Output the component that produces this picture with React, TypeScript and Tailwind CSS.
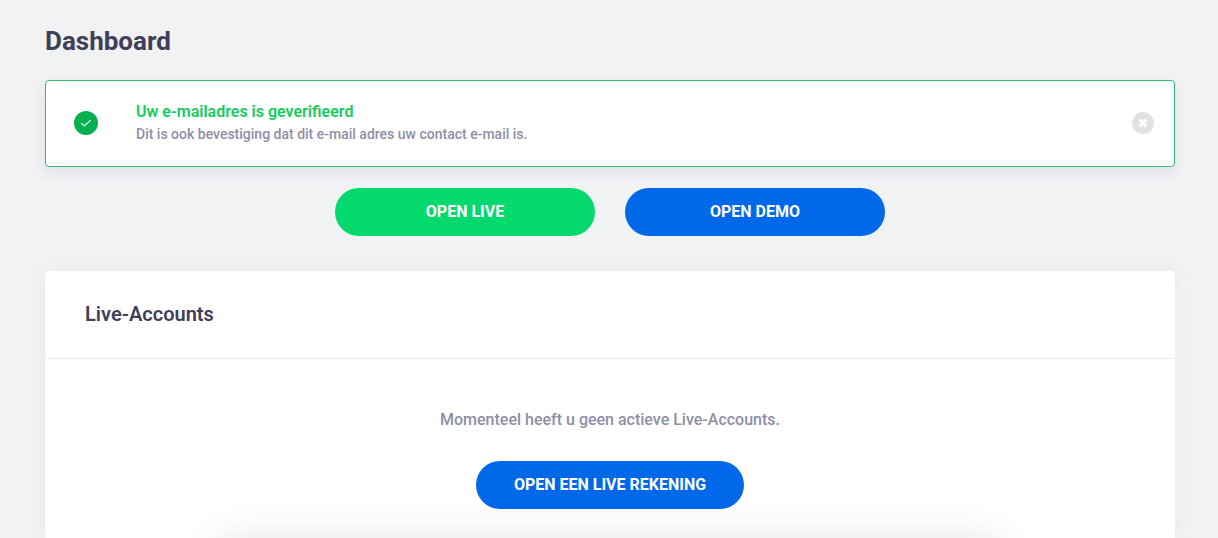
import React, { useState } from 'react'
import clsx from 'clsx'

interface PillButtonProps {
  children: React.ReactNode
  className?: string
}

const PillButton: React.FC<PillButtonProps> = ({ children, className }) => (
  <button
    type="button"
    className={clsx('h-12 cursor-pointer rounded-full text-base font-bold text-white uppercase', className)}
  >
    {children}
  </button>
)

interface AlertProps {
  title: string
  message: string
  onClose: () => void
}

const Alert: React.FC<AlertProps> = ({ title, message, onClose }) => (
  <div
    role="status"
    className="mb-[21px] flex items-center rounded border border-[#2dbd73] bg-white pt-[19px] pr-5 pb-5 pl-7 shadow-[0_6px_14px_rgba(70,75,110,0.09)]"
  >
    <svg className="h-6 w-6 shrink-0" viewBox="0 0 24 24" fill="none" aria-hidden="true">
      <circle cx="12" cy="12" r="12" fill="#06b050" />
      <path d="M7.5 12.3l2.8 2.6 6.2-5.6" stroke="#fff" strokeWidth="1.1" strokeLinecap="round" strokeLinejoin="round" />
    </svg>
    <div className="ml-[38px] flex-1 pb-0.5">
      <h2 className="text-base leading-6 font-semibold text-[#14cc60]">{title}</h2>
      <p className="text-sm leading-5 font-medium text-[#8f8ea7]">{message}</p>
    </div>
    <button type="button" aria-label="Sluiten" onClick={onClose} className="cursor-pointer">
      <svg className="h-[22px] w-[22px]" viewBox="0 0 22 22" fill="none" aria-hidden="true">
        <circle cx="11" cy="11" r="11" fill="#e2e2e2" />
        <path d="M8.6 8.6l4.8 4.8M13.4 8.6l-4.8 4.8" stroke="#fff" strokeWidth="2.8" strokeLinecap="square" />
      </svg>
    </button>
  </div>
)

const App: React.FC = () => {
  const [showAlert, setShowAlert] = useState(true)

  return (
    <div className="flex min-h-screen flex-col bg-[#f0f2f4] pt-6 pr-[43px] pl-[45px] font-['Roboto',sans-serif]">
      <h1 className="mb-[22px] text-[26px] leading-[34px] font-bold text-[#3f4058]">Dashboard</h1>

      {showAlert && (
        <Alert
          title="Uw e-mailadres is geverifieerd"
          message="Dit is ook bevestiging dat dit e-mail adres uw contact e-mail is."
          onClose={() => setShowAlert(false)}
        />
      )}

      <div className="mb-[35px] flex flex-wrap justify-center gap-[30px]">
        <PillButton className="w-[260px] bg-[#03d96c]">Open live</PillButton>
        <PillButton className="w-[260px] bg-[#0068e9]">Open demo</PillButton>
      </div>

      <section className="flex-1 rounded-t bg-white shadow-[0_1px_15px_1px_rgba(70,75,110,0.05)]">
        <header className="border-b border-[#ebedf2] px-10 py-7">
          <h2 className="text-xl leading-[31px] font-semibold text-[#3f4058]">Live-Accounts</h2>
        </header>
        <div className="flex flex-col items-center pt-12">
          <p className="mb-7 text-base leading-[26px] font-medium text-[#8f8ea7]">
            Momenteel heeft u geen actieve Live-Accounts.
          </p>
          <PillButton className="bg-[#0068e9] px-[38px]">Open een live rekening</PillButton>
        </div>
      </section>

      {/* Panel docked under the viewport, only its shadow shows */}
      <div className="pointer-events-none fixed top-full left-1/2 h-10 w-[780px] -translate-x-1/2 shadow-[0_0_40px_rgba(0,0,0,0.1)]" />
    </div>
  )
}

export default App
